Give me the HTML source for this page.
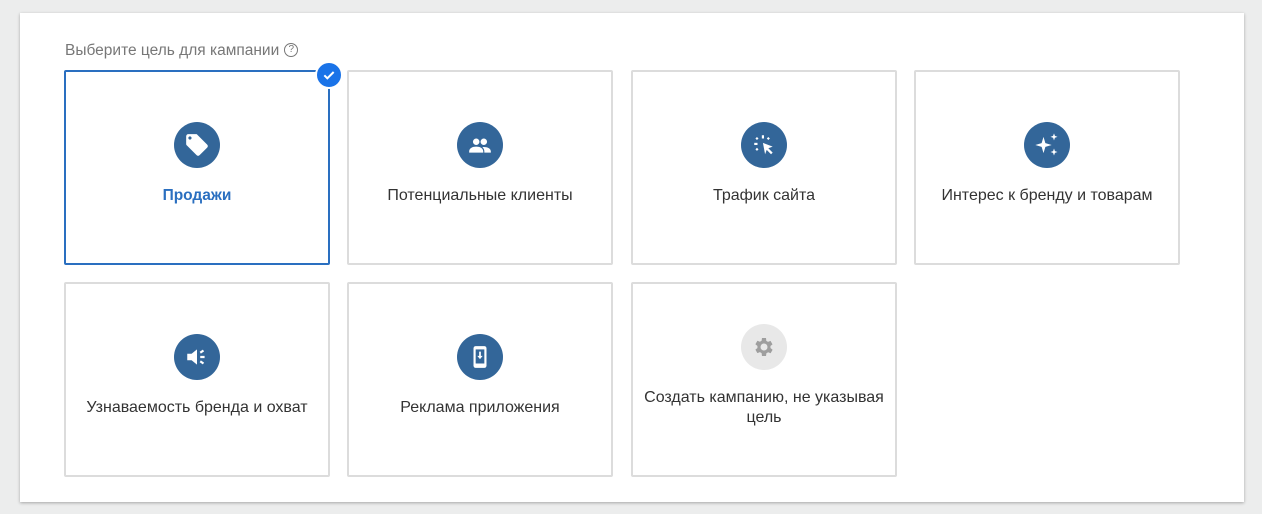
<!DOCTYPE html>
<html><head><meta charset="utf-8"><style>
body{margin:0;width:1262px;height:514px;background:#eceded;font-family:"Liberation Sans",sans-serif;position:relative;overflow:hidden}
.panel{position:absolute;left:20px;top:13px;width:1224px;height:489px;background:#fff;box-shadow:0 1px 3px rgba(0,0,0,.3)}
.h{position:absolute;left:65px;top:42px;font-size:15.5px;color:#777}
.h .q{display:inline-block;width:12px;height:12px;border:1.3px solid #777;border-radius:50%;font-size:10px;line-height:12px;text-align:center;vertical-align:3px;margin-left:5px}
.c{position:absolute;width:262px;height:191px;border:2px solid #dcdcdc;border-radius:2px;box-sizing:content-box}
.c .i{position:absolute;left:50%;margin-left:-23px;width:46px;height:46px;border-radius:50%;background:#336699;display:flex;align-items:center;justify-content:center}
.c .t{position:absolute;left:6px;right:6px;text-align:center;font-size:16px;color:#333;line-height:20px}
.chk{position:absolute;left:315px;top:61px;width:24px;height:24px;border-radius:50%;background:#1a73e8;border:2px solid #fff;display:flex;align-items:center;justify-content:center}
</style></head><body>
<div class="panel"></div>
<div class="h">Выберите цель для кампании<span class="q">?</span></div>

<div class="c" style="left:64px;top:70px;border-color:#2a6fc0">
 <div class="i" style="top:50px"><svg width="26" height="26" viewBox="0 0 24 24"><path fill="#fff" d="M21.4 11.6l-9-9C12.1 2.2 11.6 2 11 2H4c-1.1 0-2 .9-2 2v7c0 .6.2 1.1.6 1.4l9 9c.4.4.9.6 1.4.6s1-.2 1.4-.6l7-7c.4-.4.6-.9.6-1.4s-.2-1-.6-1.4zM5.5 7C4.7 7 4 6.3 4 5.5S4.7 4 5.5 4 7 4.7 7 5.5 6.3 7 5.5 7z"/></svg></div>
 <div class="t" style="top:114px;color:#2a6fc0;font-weight:bold;font-size:15.5px">Продажи</div>
</div>
<div class="chk"><svg width="16" height="16" viewBox="0 0 24 24"><path fill="none" stroke="#fff" stroke-width="3" d="M5 12.5l4.5 4.5L19 7.5"/></svg></div>

<div class="c" style="left:347px;top:70px">
 <div class="i" style="top:50px"><svg width="26" height="26" viewBox="0 0 24 24"><circle cx="8.5" cy="9" r="3" fill="#fff"/><circle cx="15.5" cy="9" r="3" fill="#fff"/><path fill="#fff" d="M2 18c0-3 3-4.5 6.5-4.5S15 15 15 18v1H2zM16 19v-1c0-1.7-.7-3-1.8-4 .4-.1.9-.1 1.3-.1 3.5 0 6.5 1.5 6.5 4.1v1z"/></svg></div>
 <div class="t" style="top:114px">Потенциальные клиенты</div>
</div>
<div class="c" style="left:631px;top:70px">
 <div class="i" style="top:50px"><svg width="26" height="26" viewBox="0 0 24 24"><path fill="#fff" d="M11 10l9 3.5-4 1.5 4 4-1.5 1.5-4-4-1.5 4z"/><rect x="10" y="3" width="2" height="3" fill="#fff"/><rect x="3" y="10" width="3" height="2" fill="#fff"/><rect x="4.5" y="5" width="2" height="2" fill="#fff" transform="rotate(45 5.5 6)"/><rect x="15" y="5" width="2" height="2" fill="#fff" transform="rotate(45 16 6)"/><rect x="4.5" y="15" width="2" height="2" fill="#fff" transform="rotate(45 5.5 16)"/></svg></div>
 <div class="t" style="top:114px">Трафик сайта</div>
</div>
<div class="c" style="left:914px;top:70px">
 <div class="i" style="top:50px"><svg width="28" height="28" viewBox="0 0 24 24"><path fill="#fff" d="M9 5l1.6 5.4L16 12l-5.4 1.6L9 19l-1.6-5.4L2 12l5.4-1.6zM18 2l.8 2.2L21 5l-2.2.8L18 8l-.8-2.2L15 5l2.2-.8zM18 15l.8 2.2L21 18l-2.2.8L18 21l-.8-2.2L15 18l2.2-.8z"/></svg></div>
 <div class="t" style="top:114px">Интерес к бренду и товарам</div>
</div>

<div class="c" style="left:64px;top:282px">
 <div class="i" style="top:50px"><svg width="26" height="26" viewBox="0 0 24 24"><path fill="#fff" d="M3 9h4l5-4v14l-5-4H3z"/><path stroke="#fff" stroke-width="2" d="M15 12h4M15 8l3-2M15 16l3 2"/></svg></div>
 <div class="t" style="top:114px">Узнаваемость бренда и охват</div>
</div>
<div class="c" style="left:347px;top:282px">
 <div class="i" style="top:50px"><svg width="26" height="26" viewBox="0 0 24 24"><rect x="6" y="2" width="12" height="20" rx="2" fill="#fff"/><rect x="8" y="5" width="8" height="13" fill="#336699"/><path fill="#fff" d="M11.2 7h1.6v4h1.7L12 14l-2.5-3h1.7z"/></svg></div>
 <div class="t" style="top:114px">Реклама приложения</div>
</div>
<div class="c" style="left:631px;top:282px">
 <div class="i" style="top:40px;background:#e8e8e8"><svg width="24" height="24" viewBox="0 0 24 24"><path fill="#9e9e9e" d="M19.4 13c0-.3.1-.6.1-1s0-.7-.1-1l2.1-1.6-2-3.5-2.5 1c-.5-.4-1.1-.7-1.7-1L15 3h-4l-.4 2.7c-.6.3-1.2.6-1.700 1l-2.5-1-2 3.5L6.5 11c0 .3-.1.6-.1 1s0 .7.1 1l-2.1 1.6 2 3.5 2.5-1c.5.4 1.1.7 1.7 1L11 21h4l.4-2.7c.6-.3 1.2-.6 1.7-1l2.5 1 2-3.5zM13 15.5a3.5 3.5 0 110-7 3.5 3.5 0 010 7z" transform="translate(-1 0)"/></svg></div>
 <div class="t" style="top:104px">Создать кампанию, не указывая цель</div>
</div>
</body></html>
